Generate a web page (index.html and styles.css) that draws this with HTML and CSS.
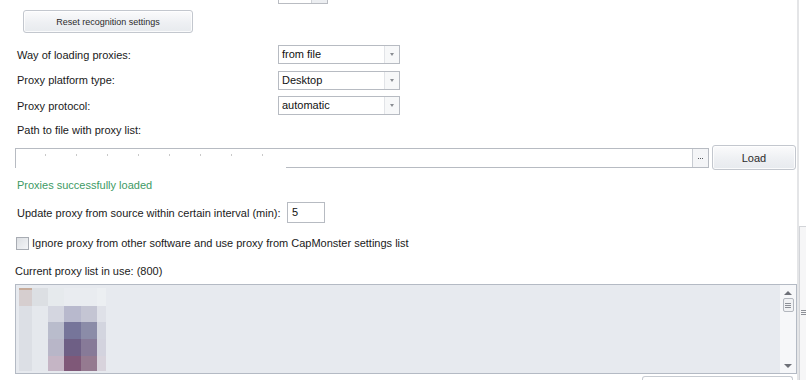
FILE: index.html
```html
<!DOCTYPE html>
<html lang="en">
<head>
  <meta charset="UTF-8" />
  <title>Proxy settings</title>
  <link rel="stylesheet" href="styles.css">
</head>
<body>
  <div class="window">
    <div class="pane">
      <div class="spin-stub"><span class="spin-btn"></span></div>

      <button class="btn reset-btn">Reset recognition settings</button>

      <div class="settings">
        <label>Way of loading proxies:</label>
        <div class="combo"><span class="combo-text">from file</span><span class="combo-arrow"></span></div>
        <label>Proxy platform type:</label>
        <div class="combo"><span class="combo-text">Desktop</span><span class="combo-arrow"></span></div>
        <label>Proxy protocol:</label>
        <div class="combo"><span class="combo-text">automatic</span><span class="combo-arrow"></span></div>
      </div>

      <div class="caption path-caption">Path to file with proxy list:</div>
      <div class="path-row">
        <div class="path-edit">
          <span class="path-blur"></span>
          <span class="ellipsis"><i></i><i></i><i></i></span>
        </div>
        <button class="btn load-btn">Load</button>
      </div>

      <div class="status">Proxies successfully loaded</div>

      <div class="interval-row">
        <label>Update proxy from source within certain interval (min):</label>
        <div class="num-edit">5</div>
      </div>

      <label class="check-row"><span class="checkbox"></span>Ignore proxy from other software and use proxy from CapMonster settings list</label>

      <div class="caption list-caption">Current proxy list in use: (800)</div>
      <div class="list-box">
        <div class="mosaic"></div>
        <div class="list-scroll">
          <span class="arrow-up"></span>
          <span class="thumb"><i></i><i></i><i></i></span>
          <span class="track"></span>
          <span class="arrow-down"></span>
        </div>
      </div>

      <div class="bottom-stub"></div>
    </div>

    <div class="outer-scroll">
      <div class="outer-space"></div>
      <div class="outer-thumb">
        <span class="grip"><i></i><i></i><i></i></span>
      </div>
    </div>
  </div>
</body>
</html>
```

FILE: styles.css
```css
body {
  margin: 0;
  background: #fff;
  font-family: 'Liberation Sans', Arial, sans-serif;
  font-size: 11px;
  color: #1a1a1a;
  overflow: hidden;
}

.window {
  display: flex;
  width: 806px;
  height: 380px;
  overflow: hidden;
}

.pane {
  width: 797px;
  flex: none;
}

/* bottom edge of the spin edit scrolled off the top */
.spin-stub {
  margin-left: 278px;
  width: 48px;
  height: 3px;
  border: 1px solid #b9bcc2;
  border-top: none;
  display: flex;
  justify-content: flex-end;
}

.spin-btn {
  width: 15px;
  background: #eceef1;
  border-left: 1px solid #d0d3d8;
}

.btn {
  font-family: 'Liberation Sans', Arial, sans-serif;
  color: #2b2b2b;
  background: linear-gradient(#fbfbfc, #eef0f3 55%, #e7eaee);
  border: 1px solid #c3c7ce;
  border-radius: 3px;
  padding: 0;
  box-shadow: inset 0 0 0 1px rgba(255,255,255,0.8);
}

.reset-btn {
  display: block;
  margin: 6px 0 0 23px;
  width: 170px;
  height: 23px;
  font-size: 9px;
}

.settings {
  display: grid;
  grid-template-columns: 261px 122px;
  grid-auto-rows: 19px;
  row-gap: 6.5px;
  align-items: center;
  margin: 12px 0 0 17px;
}

.combo {
  height: 19px;
  box-sizing: border-box;
  border: 1px solid #b7bbc2;
  display: flex;
  background: #fff;
}

.combo-text {
  flex: 1;
  padding-left: 3px;
  line-height: 17px;
  font-size: 11px;
  color: #111;
}

.combo-arrow {
  width: 14px;
  border-left: 1px solid #e2e4e8;
  background: #f7f8f9;
  position: relative;
}

.combo-arrow::after {
  content: "";
  position: absolute;
  left: 5px;
  top: 7px;
  border-left: 2.5px solid transparent;
  border-right: 2.5px solid transparent;
  border-top: 3px solid #8a8d93;
}

.caption {
  line-height: 13px;
}

.path-caption {
  margin: 9px 0 0 17px;
}

.path-row {
  display: flex;
  align-items: center;
  margin: 8px 0 0 15px;
}

.path-edit {
  width: 694px;
  height: 20px;
  box-sizing: border-box;
  border: 1px solid #b7bbc2;
  display: flex;
  position: relative;
}

/* blurred-out path text covers the bottom border on the left */
.path-blur {
  position: absolute;
  left: 0;
  top: 0;
  width: 270px;
  height: 19px;
  background:
    radial-gradient(circle, #c9c9c9 0.6px, transparent 1px) 14px 3px / 31px 6px repeat-x,
    #fff;
}

.ellipsis {
  margin-left: auto;
  width: 15px;
  border-left: 1px solid #c8ccd2;
  background: #f4f5f7;
  display: flex;
  justify-content: center;
  align-items: center;
  gap: 1px;
  padding-top: 1px;
}

.ellipsis i {
  width: 1px;
  height: 1px;
  background: #55585e;
}

.load-btn {
  margin-left: 3px;
  width: 84px;
  height: 25px;
  font-size: 11px;
}

.status {
  margin: 9px 0 0 17px;
  line-height: 13px;
  color: #3d9a64;
}

.interval-row {
  display: grid;
  grid-template-columns: 270px 38px;
  align-items: center;
  margin: 10px 0 0 17px;
}

.num-edit {
  height: 21px;
  box-sizing: border-box;
  border: 1px solid #b7bbc2;
  padding-left: 4px;
  line-height: 19px;
  color: #111;
}

.check-row {
  display: flex;
  align-items: center;
  gap: 3px;
  margin: 14px 0 0 16px;
  line-height: 13px;
}

.checkbox {
  width: 11px;
  height: 11px;
  border: 1px solid #a8acb3;
  background: linear-gradient(135deg, #dcdfe3, #f4f5f7);
}

.list-caption {
  margin: 15px 0 0 15px;
}

.list-box {
  margin: 6px 0 0 15px;
  width: 782px;
  height: 90px;
  box-sizing: border-box;
  border: 1px solid #b4bac4;
  background: #e7eaef;
  display: flex;
  justify-content: space-between;
}

/* pixelated (blurred) proxy entries */
.mosaic {
  margin: 3px 0 0 3px;
  width: 87px;
  height: 83px;
  background:
    linear-gradient(#c6ab9a, #c6ab9a) 0 0 / 13px 2px no-repeat,
    linear-gradient(90deg, #d6cecf 13px, #dcdfe3 13px 29px, #e6eaed 29px 45px, #e9ecf0 45px 78px, #eceff2 78px) 0 0 / 87px 18px no-repeat,
    linear-gradient(90deg, #dcdfe5 13px, #e5e8ed 13px 29px, #d4d6e0 29px 45px, #b8b9cd 45px 62px, #c4c5d3 62px 78px, #dfe1e8 78px) 0 18px / 87px 16px no-repeat,
    linear-gradient(90deg, #dcdfe5 13px, #e5e8ed 13px 29px, #b9bccc 29px 45px, #76759a 45px 62px, #8b8ca8 62px 78px, #d3d5df 78px) 0 34px / 87px 17px no-repeat,
    linear-gradient(90deg, #dcdfe5 13px, #e5e8ed 13px 29px, #b8b6c8 29px 45px, #6e5f85 45px 62px, #877a98 62px 78px, #d3d3de 78px) 0 51px / 87px 17px no-repeat,
    linear-gradient(90deg, #dcdfe5 13px, #e5e8ed 13px 29px, #c5b5c5 29px 45px, #7f5878 45px 62px, #957a90 62px 78px, #d8d3dc 78px) 0 68px / 87px 15px no-repeat;
}

.list-scroll {
  width: 16px;
  background: #f6f7f9;
  display: flex;
  flex-direction: column;
  align-items: center;
}

.arrow-up,
.arrow-down {
  width: 0;
  height: 0;
  border-left: 4px solid transparent;
  border-right: 4px solid transparent;
}

.arrow-up {
  margin-top: 6px;
  border-bottom: 4px solid #6e7178;
}

.arrow-down {
  margin-bottom: 5px;
  border-top: 4px solid #6e7178;
}

.thumb,
.grip {
  display: flex;
  flex-direction: column;
  justify-content: center;
  align-items: center;
  gap: 1px;
}

.thumb {
  margin-top: 3px;
  width: 11px;
  height: 14px;
  box-sizing: border-box;
  border: 1px solid #b3b7be;
  border-radius: 2px;
  background: #f1f2f4;
}

.thumb i,
.grip i {
  width: 6px;
  height: 1px;
  background: #8d9097;
}

.track {
  flex: 1;
}

.bottom-stub {
  margin: 2px 0 0 642px;
  width: 151px;
  height: 6px;
  box-sizing: border-box;
  border: 1px solid #c7cbd1;
  border-bottom: none;
  border-radius: 3px 3px 0 0;
}

.outer-scroll {
  width: 9px;
  flex: none;
  display: flex;
  flex-direction: column;
  border-left: 2px solid #e4e5e7;
  box-sizing: border-box;
}

.outer-space {
  height: 226px;
}

.outer-thumb {
  flex: 1;
  border-top: 1px solid #d2d4d8;
  border-left: 1px solid #d2d4d8;
  background: #f6f6f7;
  padding: 83px 0 0 1px;
}
```
